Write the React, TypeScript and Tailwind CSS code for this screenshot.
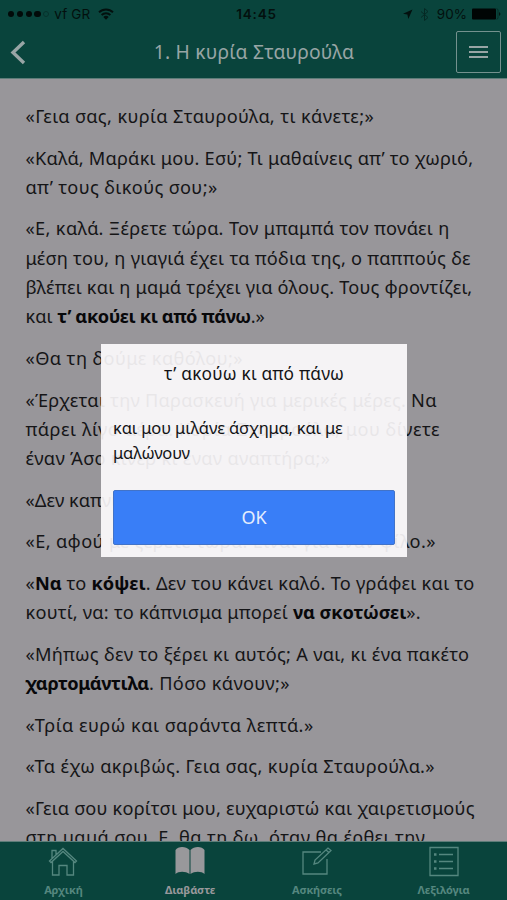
import React from "react";

const W = ({ children, className = "" }: { children: React.ReactNode; className?: string }) => (
  <b className={`font-bold text-[#08080a] ${className || "tracking-normal"}`}>{children}</b>
);

function Para({ children }: { children: React.ReactNode }) {
  return <p className="mb-[12.25px] flex flex-col items-start whitespace-nowrap">{children}</p>;
}

function StatusBar() {
  return (
    <div className="flex h-[28px] items-center px-2 font-['Inter',sans-serif] text-[13.5px] text-[#03100e]">
      <div className="flex flex-1 items-center">
        <div className="flex gap-[2.6px]">
          {[0, 1, 2, 3].map((i) => (
            <i key={i} className="size-[6.2px] rounded-full bg-[#020a09]" />
          ))}
          <i className="size-[6.2px] rounded-full border border-[#07322c]" />
        </div>
        <span className="ml-[5px] tracking-[0.15px]">vf GR</span>
        <svg className="ml-2" width="16" height="12" viewBox="0 0 16 12" fill="none" stroke="currentColor" strokeWidth="1.9">
          <path d="M1 4.3a10 10 0 0 1 14 0M3.6 7a6.3 6.3 0 0 1 8.8 0" />
          <path d="M8 11.7 5.3 9a4 4 0 0 1 5.4 0z" fill="currentColor" stroke="none" />
        </svg>
      </div>
      <b className="mr-[-6px] font-semibold tracking-[0.8px]">14:45</b>
      <div className="flex flex-1 items-center justify-end">
        <svg width="11" height="11" viewBox="0 0 11 11" fill="currentColor">
          <path d="M10.5.5 6.3 10 5.4 5.6 1 4.7z" />
        </svg>
        <svg className="ml-[7px] opacity-50" width="9" height="13" viewBox="0 0 9 13" fill="none" stroke="currentColor">
          <path d="m1 3.5 7 6-3.5 3V.5L8 3.5l-7 6" />
        </svg>
        <span className="ml-[8px]">90%</span>
        <svg className="-mr-[3px] ml-[4px]" width="31" height="12" viewBox="0 0 31 12" fill="#000504">
          <rect x="1" y=".5" width="24" height="11" rx="1" />
          <path d="M25.5.7q1.5 0 1.5 1.5v7.6q0 1.5-1.5 1.5" fill="none" stroke="#000504" strokeWidth=".7" opacity=".5" />
          <path d="M28.3 4q2 2 0 4z" />
        </svg>
      </div>
    </div>
  );
}

function Tab({ label, active, children }: { label: string; active?: boolean; children: React.ReactNode }) {
  return (
    <div className={`flex flex-1 flex-col items-center ${active ? "text-[#98989b]" : "text-[#55877f]"}`}>
      <svg className="mt-[3px] shrink-0" width="32" height="32" viewBox="0 0 32 32" fill="none" stroke="currentColor" strokeWidth="1.3">
        {children}
      </svg>
      <span className="mt-[5px] text-[11px] leading-[15px] font-bold tracking-[-0.15px]">{label}</span>
    </div>
  );
}

export default function App() {
  return (
    <div className="relative flex h-[900px] w-[507px] flex-col overflow-hidden bg-[#98969a] font-['Noto_Sans',sans-serif] text-[#151517]">
      <header className="h-[79px] shrink-0 border-b border-[#5d7d79] bg-[#09443c]">
        <StatusBar />
        <div className="flex h-[49px] items-center justify-between pr-[6px] pl-[10px] text-[#98a5a5]">
          <svg className="mt-[-2px]" width="42" height="28" viewBox="0 0 42 28" fill="none" stroke="currentColor" strokeWidth="3.4">
            <path d="M14 4 3 14.5 14 25" />
          </svg>
          <h1 className="text-[19.3px] tracking-[0.2px]">1. Η κυρία Σταυρούλα</h1>
          <button className="mt-[-1px] flex h-[42px] w-[45px] items-center justify-center rounded-[2px] border border-[#74918e]">
            <svg width="19" height="14" viewBox="0 0 19 14" stroke="currentColor" strokeWidth="1.8">
              <path d="M0 2h19M0 7h19M0 12h19" />
            </svg>
          </button>
        </div>
      </header>
      <main className="min-h-0 flex-1 overflow-hidden pt-[23px] pl-[25.5px] text-[18.2px] leading-[29.33px]">
        <Para>
          <span className="tracking-[0.38px]">«Γεια σας, κυρία Σταυρούλα, τι κάνετε;»</span>
        </Para>
        <Para>
          <span className="tracking-[0.22px]">«Καλά, Μαράκι μου. Εσύ; Τι μαθαίνεις απ’ το χωριό,</span>
          <span className="tracking-[0.38px]">απ’ τους δικούς σου;»</span>
        </Para>
        <Para>
          <span className="tracking-[0.34px]">«Ε, καλά. Ξέρετε τώρα. Τον μπαμπά τον πονάει η</span>
          <span className="tracking-[0.25px]">μέση του, η γιαγιά έχει τα πόδια της, ο παππούς δε</span>
          <span className="tracking-[0.19px]">βλέπει και η μαμά τρέχει για όλους. Τους φροντίζει,</span>
          <span>
            και <W className="tracking-[-0.42px]">τ’ ακούει κι από πάνω</W>.»
          </span>
        </Para>
        <Para>
          <span className="tracking-[0.4px]">«Θα τη δούμε καθόλου;»</span>
        </Para>
        <Para>
          <span className="tracking-[0.23px]">«Έρχεται την Παρασκευή για μερικές μέρες. Να</span>
          <span className="tracking-[0.53px]">πάρει λίγο αέρα. Κυρία Σταυρούλα, μου δίνετε</span>
          <span className="tracking-[0.3px]">έναν Άσο κίνερ κι έναν αναπτήρα;»</span>
        </Para>
        <Para>
          <span>«Δεν καπνίζεις!»</span>
        </Para>
        <Para>
          <span className="tracking-[0.39px]">«Ε, αφού με ξέρετε τώρα. Είναι για έναν φίλο.»</span>
        </Para>
        <Para>
          <span className="tracking-[0.24px]">
            «<W>Να</W> το <W>κόψει</W>. Δεν του κάνει καλό. Το γράφει και το
          </span>
          <span className="tracking-[0.24px]">
            κουτί, να: το κάπνισμα μπορεί <W className="tracking-[-0.12px]">να σκοτώσει</W>».
          </span>
        </Para>
        <Para>
          <span className="tracking-[0.29px]">«Μήπως δεν το ξέρει κι αυτός; Α ναι, κι ένα πακέτο</span>
          <span className="tracking-[0.35px]">
            <W className="tracking-[-0.4px]">χαρτομάντιλα</W>. Πόσο κάνουν;»
          </span>
        </Para>
        <Para>
          <span className="tracking-[0.48px]">«Τρία ευρώ και σαράντα λεπτά.»</span>
        </Para>
        <Para>
          <span className="tracking-[0.37px]">«Τα έχω ακριβώς. Γεια σας, κυρία Σταυρούλα.»</span>
        </Para>
        <Para>
          <span className="tracking-[0.23px]">«Γεια σου κορίτσι μου, ευχαριστώ και χαιρετισμούς</span>
          <span className="tracking-[0.35px]">στη μαμά σου. Ε, θα τη δω, όταν θα έρθει την</span>
        </Para>
      </main>
      <nav className="flex h-[59px] shrink-0 border-t border-[#5d7d79] bg-[#09443c]">
        <Tab label="Αρχική">
          <path d="M2.5 16 16 3.5 29.5 16l-1.5 1.5L16 6.5 4 17.5zM5.5 16.5V30H12v-9.5h8V30h6.5V16.5M5 13.5V5.5h4v4" />
        </Tab>
        <Tab label="Διαβάστε" active>
          <path d="M15.5 5C12 1 4 1 1.5 5v24c3-3 10-3 14 0zM16.5 5C20 1 28 1 30.5 5v24c-3-3-10-3-14 0z" fill="currentColor" stroke="none" />
        </Tab>
        <Tab label="Ασκήσεις">
          <path d="M20 7H2v22h24V14M13 19l1-4L27 3l3 2.5L17 18zM25 5l3 2.5" />
        </Tab>
        <Tab label="Λεξιλόγια">
          <path d="M2 2.5h28v28H2zM11 9.5h14M11 16.5h14M11 23.5h14" />
          <path d="M6 9.5h2.5M6 16.5h2.5M6 23.5h2.5" strokeWidth="2.5" />
        </Tab>
      </nav>
      <div role="dialog" className="absolute top-[344px] left-[101px] flex h-[213px] w-[306px] flex-col bg-[#fffdff]/90 px-3 text-[#131316]">
        <h2 className="mt-[17px] text-center text-[17.3px] leading-[26px] tracking-[0.2px]">τ’ ακούω κι από πάνω</h2>
        <p className="mt-[29px] text-[16.5px] leading-[24.5px] tracking-[-0.14px] whitespace-nowrap">
          και μου μιλάνε άσχημα, και με
          <br />
          μαλώνουν
        </p>
        <button className="mt-auto mb-[12.5px] h-[55px] rounded-[2px] border border-[#4273c8] bg-[#397ef7] text-[18px] text-[#e4edfd]">OK</button>
      </div>
    </div>
  );
}
